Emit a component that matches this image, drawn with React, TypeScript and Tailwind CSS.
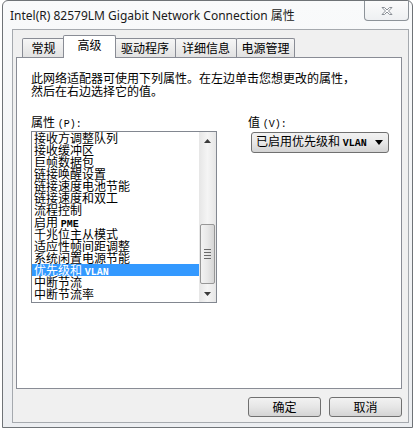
import React from "react";

const props = [
  "接收方调整队列",
  "接收缓冲区",
  "巨帧数据包",
  "链接唤醒设置",
  "链接速度电池节能",
  "链接速度和双工",
  "流程控制",
  "启用 PME",
  "千兆位主从模式",
  "适应性帧间距调整",
  "系统闲置电源节能",
  "优先级和 VLAN",
  "中断节流",
  "中断节流率",
];

// SimSun-style: latin letters are half width
function Mixed({ text }: { text: string }) {
  const parts = text.split(/([A-Za-z]+)/);
  return (
    <>
      {parts.map((p, i) =>
        /^[A-Za-z]+$/.test(p) ? (
          <span key={i} className="font-['Liberation_Mono'] text-[10px] font-semibold">
            {p}
          </span>
        ) : (
          <span key={i}>{p}</span>
        )
      )}
    </>
  );
}

function Tab({ label, w, active, extra }: { label: string; w: string; active?: boolean; extra?: string }) {
  if (active) {
    return (
      <div
        className={`${w} ${extra ?? ""} relative z-10 h-[23px] -mb-px border border-b-0 border-[#898c95] bg-white rounded-t-[2px] flex justify-center pt-[1px] text-[12px] leading-[16px]`}
      >
        {label}
      </div>
    );
  }
  return (
    <div
      className={`${w} ${extra ?? ""} h-[19px] border border-b-0 border-[#898c95] bg-gradient-to-b from-[#f6f6f6] to-[#e2e2e2] rounded-t-[2px] flex items-center justify-center text-[12px] leading-[16px]`}
    >
      {label}
    </div>
  );
}

function Btn({ label }: { label: string }) {
  return (
    <button className="w-[73px] h-[20px] border border-[#707070] rounded-[3px] bg-gradient-to-b from-[#f2f2f2] via-[#e6e6e6] to-[#d4d4d4] text-[12px] leading-[16px] text-black flex items-center justify-center">
      {label}
    </button>
  );
}

export default function App() {
  return (
    <div className="w-[419px] h-[429px] bg-white font-['Noto_Sans_CJK_SC','Noto_Sans',sans-serif] text-black overflow-hidden">
      {/* window frame */}
      <div className="ml-[2px] w-[411px] h-[428px] border border-[#6f7377] rounded-t-[6px] bg-gradient-to-b from-[#f9fafb] to-[#eceef1] flex flex-col">
        {/* title bar */}
        <div className="h-[28px] flex items-start justify-between">
          <span className="pl-[7px] pt-[7px] text-[12px] leading-[16px] font-['Noto_Sans','Noto_Sans_CJK_SC',sans-serif] text-[#1a1a1a]">
            Intel(R) 82579LM Gigabit Network Connection 属性
          </span>
          <div className="mr-[3px] w-[45px] h-[20px] border border-t-0 border-[#8d9399] rounded-b-[4px] bg-gradient-to-b from-[#fbfbfb] to-[#eef0f2] flex items-center justify-center">
            <svg width="12" height="10" viewBox="0 0 12 10">
              <path
                d="M1 1.5 L3.5 1.5 L6 4 L8.5 1.5 L11 1.5 L7.5 5 L11 8.5 L8.5 8.5 L6 6 L3.5 8.5 L1 8.5 L4.5 5 Z"
                fill="#ffffff"
                stroke="#8a8f96"
                strokeWidth="1"
                strokeLinejoin="round"
              />
            </svg>
          </div>
        </div>

        {/* client area */}
        <div className="ml-[9px] w-[397px] h-[394px] border border-[#a5a9ae] bg-[#f0f0f0] flex flex-col">
          {/* tab strip */}
          <div className="mt-[5px] pl-[9px] h-[22px] flex items-end">
            <Tab label="常规" w="w-[43px]" />
            <Tab label="高级" w="w-[53px]" active extra="-ml-[2px]" />
            <Tab label="驱动程序" w="w-[62px]" extra="-ml-[2px]" />
            <Tab label="详细信息" w="w-[62px]" extra="-ml-px" />
            <Tab label="电源管理" w="w-[59px]" extra="-ml-px" />
          </div>

          {/* tab panel */}
          <div className="ml-[3px] w-[386px] h-[332px] border border-[#898c95] bg-white flex flex-col pl-[14px]">
            <p className="mt-[13px] text-[12px] leading-[13px]">
              此网络适配器可使用下列属性。在左边单击您想更改的属性，
              <br />
              然后在右边选择它的值。
            </p>

            <div className="mt-[19px] flex">
              {/* properties list */}
              <div className="w-[186px] flex flex-col">
                <div className="text-[12px] leading-[12px] h-[12px]">
                  属性 <span className="font-['Liberation_Mono'] text-[10px]">(P):</span>
                </div>
                <div className="mt-[3px] h-[172px] border border-[#828790] flex">
                  <div className="flex-1 flex flex-col">
                    {props.map((p) => {
                      const sel = p === "优先级和 VLAN";
                      return (
                        <div
                          key={p}
                          className={`h-[12px] text-[12px] leading-[12px] pl-[2px] whitespace-nowrap ${
                            sel ? "bg-[#3399ff] text-white" : ""
                          }`}
                        >
                          <Mixed text={p} />
                        </div>
                      );
                    })}
                  </div>
                  {/* scrollbar */}
                  <div className="w-[17px] bg-gradient-to-r from-[#e6e6e6] via-[#f5f5f5] to-[#e6e6e6] flex flex-col">
                    <div className="h-[17px] flex items-center justify-center">
                      <svg width="7" height="4" viewBox="0 0 7 4">
                        <path d="M3.5 0 L7 4 L0 4 Z" fill="#3c3c3c" />
                      </svg>
                    </div>
                    <div className="flex-1">
                      <div className="mt-[75px] mx-[1px] h-[60px] border border-[#979797] rounded-[2px] bg-gradient-to-r from-[#f3f3f3] via-[#e8e8e8] to-[#d6d6d6] flex flex-col items-center justify-center gap-[2px]">
                        <div className="w-[7px] h-px bg-[#6a6a6a]" />
                        <div className="w-[7px] h-px bg-[#6a6a6a]" />
                        <div className="w-[7px] h-px bg-[#6a6a6a]" />
                        <div className="w-[7px] h-px bg-[#6a6a6a]" />
                      </div>
                    </div>
                    <div className="h-[17px] flex items-center justify-center">
                      <svg width="7" height="4" viewBox="0 0 7 4">
                        <path d="M0 0 L7 0 L3.5 4 Z" fill="#3c3c3c" />
                      </svg>
                    </div>
                  </div>
                </div>
              </div>

              {/* value */}
              <div className="ml-[31px] flex flex-col">
                <div className="text-[12px] leading-[12px] h-[12px]">
                  值 <span className="font-['Liberation_Mono'] text-[10px]">(V):</span>
                </div>
                <div className="mt-[4px] ml-[3px] w-[138px] h-[21px] border border-[#707070] rounded-[3px] bg-gradient-to-b from-[#f2f2f2] via-[#e8e8e8] to-[#d3d3d3] flex items-center justify-between pl-[4px] pr-[5px] text-[12px] leading-[14px]">
                  <span className="whitespace-nowrap">
                    <Mixed text="已启用优先级和 VLAN" />
                  </span>
                  <svg width="8" height="5" viewBox="0 0 8 5">
                    <path d="M0 0 L8 0 L4 5 Z" fill="#000000" />
                  </svg>
                </div>
              </div>
            </div>
          </div>

          {/* buttons */}
          <div className="mt-[8px] pr-[6px] flex justify-end gap-[8px]">
            <Btn label="确定" />
            <Btn label="取消" />
          </div>
        </div>
      </div>
    </div>
  );
}
